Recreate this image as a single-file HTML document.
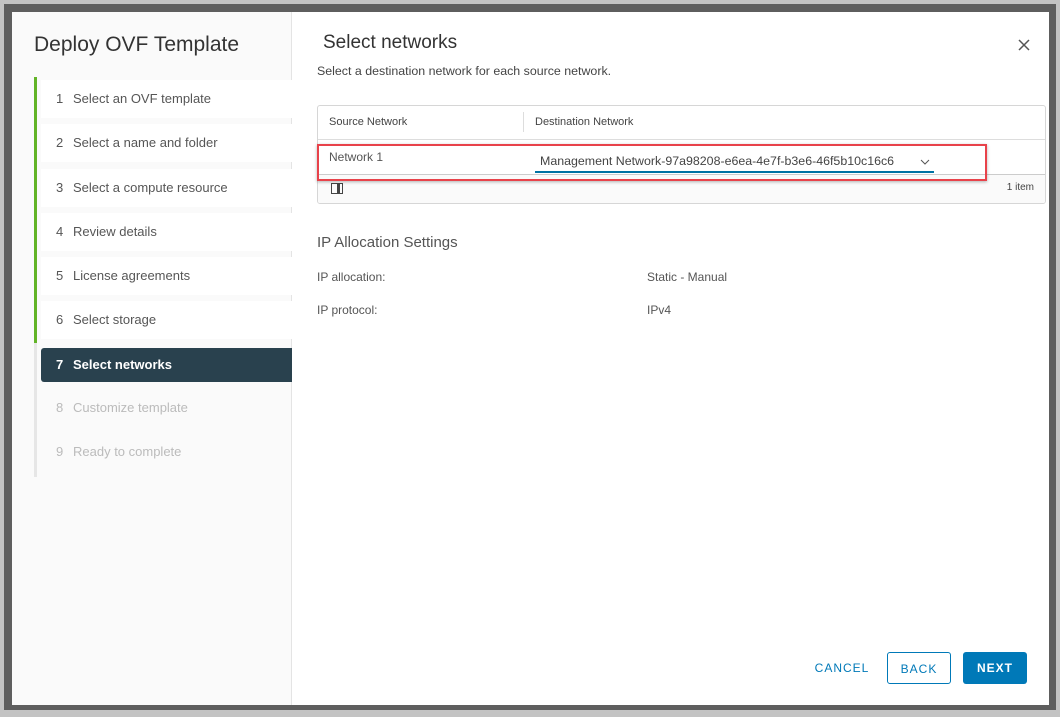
<!DOCTYPE html>
<html><head><style>
*{margin:0;padding:0;box-sizing:border-box}
body{width:1060px;height:717px;background:#c3c3c3;font-family:"Liberation Sans",sans-serif;position:relative;overflow:hidden}
.ov{position:absolute;left:4px;top:4px;width:1052px;height:706px;background:#5e5e5e}
.bgt{position:absolute;color:#2a2a2a;font-size:11px}
.modal{position:absolute;left:12px;top:12px;width:1037px;height:693px;background:#fff}
.left{position:absolute;left:0;top:0;width:280px;height:693px;background:#fafafa;border-right:1px solid #e4e4e4}
h1{position:absolute;left:22px;top:21px;font-weight:normal;font-size:21px;color:#333}
.bar{position:absolute;left:22px;width:3px}
.step{position:absolute;left:29px;width:251px;height:38px;background:#fff;font-size:13px;color:#565656;padding-left:15px;line-height:38px}
.step b{font-weight:normal;display:inline-block;width:17px}
.step.act{background:#29414e;color:#fff;font-weight:bold;border-radius:3px 0 0 3px;height:34px;line-height:34px}
.step.act b{font-weight:bold}
.step.dis{background:transparent;color:#bbb}
h2{position:absolute;left:311px;top:20px;font-weight:normal;font-size:19px;color:#333}
.sub{position:absolute;left:305px;top:52px;font-size:12.4px;color:#444}
.x{position:absolute;left:1005px;top:26px}
.grid{position:absolute;left:305px;top:93px;width:729px;height:99px;border:1px solid #d6d6d6;border-radius:3px;overflow:hidden}
.hd{position:absolute;top:0;height:33px;line-height:33px;font-size:11px;color:#444}
.foot{position:absolute;left:0;right:0;bottom:0;height:29px;background:#fafafa;border-top:1px solid #ccc}
.red{position:absolute;left:305px;top:132px;width:670px;height:37px;border:2px solid #e8424a;box-shadow:0 1px 3px rgba(0,0,0,.3)}
.lbl{position:absolute;font-size:12px;color:#555}
.btn{position:absolute;top:640px;height:32px;line-height:32px;font-size:12px;letter-spacing:1px;text-align:center;border-radius:3px;font-weight:bold}
</style></head><body>
<div class="ov"></div>
<div class="modal">
 <div class="left">
  <h1>Deploy OVF Template</h1>
  <div class="bar" style="top:65px;height:266px;background:#62b427"></div>
  <div class="bar" style="top:331px;height:134px;background:#e6e6e6"></div>
  <div class="step" style="top:68px"><b>1</b>Select an OVF template</div>
  <div class="step" style="top:112px"><b>2</b>Select a name and folder</div>
  <div class="step" style="top:157px"><b>3</b>Select a compute resource</div>
  <div class="step" style="top:201px"><b>4</b>Review details</div>
  <div class="step" style="top:245px"><b>5</b>License agreements</div>
  <div class="step" style="top:289px"><b>6</b>Select storage</div>
  <div class="step act" style="top:336px"><b>7</b>Select networks</div>
  <div class="step dis" style="top:377px"><b>8</b>Customize template</div>
  <div class="step dis" style="top:421px"><b>9</b>Ready to complete</div>
 </div>
 <h2>Select networks</h2>
 <div class="sub">Select a destination network for each source network.</div>
 <svg class="x" width="14" height="14" viewBox="0 0 14 14"><path d="M2 2L12 12M12 2L2 12" stroke="#555" stroke-width="1.5"/></svg>
 <div class="grid">
  <div class="hd" style="left:11px">Source Network</div>
  <div style="position:absolute;left:205px;top:6px;width:1px;height:20px;background:#ddd"></div>
  <div class="hd" style="left:217px">Destination Network</div>
  <div style="position:absolute;left:0;top:33px;width:727px;height:1px;background:#ddd"></div>
  <div class="lbl" style="left:11px;top:44px">Network 1</div>
  <div class="lbl" style="left:222px;top:48px;color:#444;font-size:12.4px">Management Network-97a98208-e6ea-4e7f-b3e6-46f5b10c16c6</div>
  <svg style="position:absolute;left:602px;top:53px" width="10" height="7"><path d="M1 1L5 5L9 1" stroke="#555" fill="none"/></svg>
  <div style="position:absolute;left:217px;top:65px;width:399px;height:2px;background:#0072a3"></div>
  <div class="foot">
   <svg style="position:absolute;left:13px;top:8px" width="12" height="11"><rect x="0.5" y="0.5" width="11" height="10" fill="none" stroke="#444"/><rect x="6" y="1" width="3" height="9" fill="#444"/></svg>
   <div class="lbl" style="right:11px;top:7px;font-size:10px;color:#444">1 item</div>
  </div>
 </div>
 <div class="red"></div>
 <div class="lbl" style="left:305px;top:222px;font-size:15px;color:#555">IP Allocation Settings</div>
 <div class="lbl" style="left:305px;top:258px">IP allocation:</div>
 <div class="lbl" style="left:635px;top:258px">Static - Manual</div>
 <div class="lbl" style="left:305px;top:291px">IP protocol:</div>
 <div class="lbl" style="left:635px;top:291px">IPv4</div>
 <div class="btn" style="left:800px;width:60px;color:#0079b8;font-weight:normal">CANCEL</div>
 <div class="btn" style="left:875px;width:64px;border:1px solid #0079b8;color:#0079b8;font-weight:normal">BACK</div>
 <div class="btn" style="left:951px;width:64px;background:#0079b8;color:#fff">NEXT</div>
</div>
</body></html>
